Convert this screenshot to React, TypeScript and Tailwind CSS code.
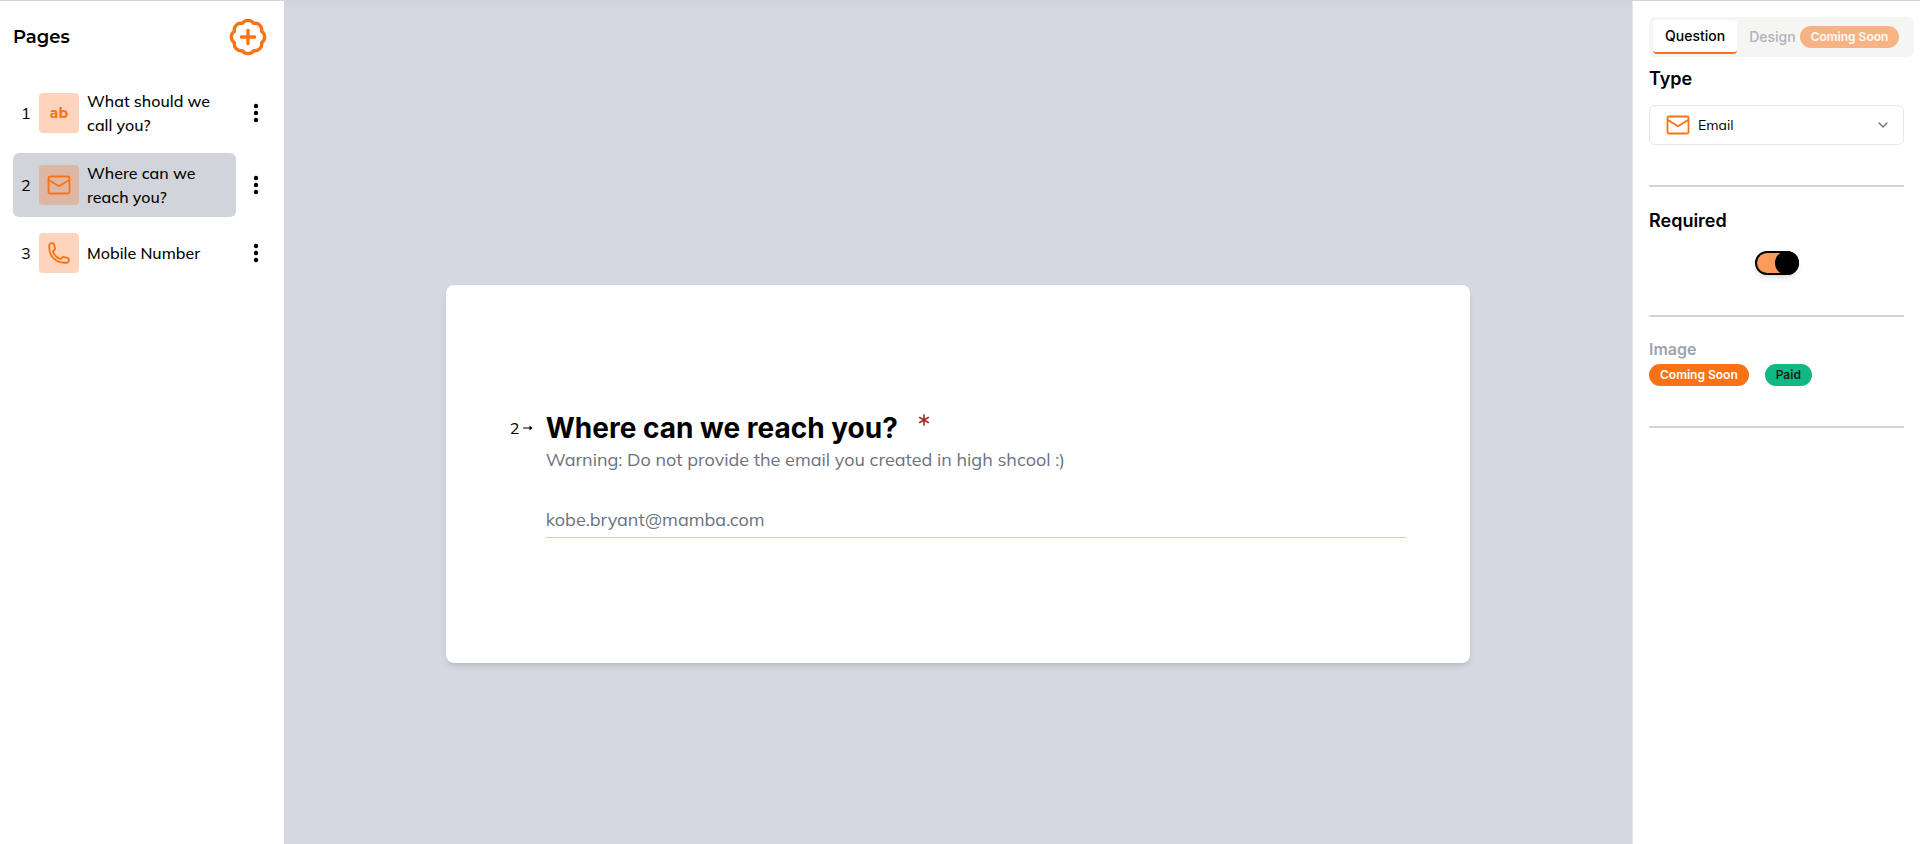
import { useState } from 'react';
import { Asterisk, BadgePlus, ChevronDown } from 'lucide-react';

interface Page {
  id: number;
  title: string;
  type: 'text' | 'email' | 'phone';
}

const pages: Page[] = [
  { id: 1, title: 'What should we call you?', type: 'text' },
  { id: 2, title: 'Where can we reach you?', type: 'email' },
  { id: 3, title: 'Mobile Number', type: 'phone' },
];

function MailIcon() {
  return (
    <svg width="24" height="24" viewBox="0 0 24 24" fill="none" stroke="#f97316" strokeWidth="1.8" strokeLinejoin="round" strokeLinecap="round">
      <rect x="1.5" y="3.5" width="21" height="17" rx="1.5" />
      <path d="M1.8 7 12 13.3 22.2 7" />
    </svg>
  );
}

function PhoneIcon() {
  return (
    <svg width="24" height="24" viewBox="0 0 24 24" fill="none" stroke="#f97316" strokeWidth="1.8" strokeLinejoin="round" strokeLinecap="round">
      <path d="M2.25 6.75c0 8.284 6.716 15 15 15h2.25a2.25 2.25 0 0 0 2.25-2.25v-1.372c0-.516-.351-.966-.852-1.091l-4.423-1.106c-.44-.11-.902.055-1.173.417l-.97 1.293c-.282.376-.769.542-1.21.38a12.035 12.035 0 0 1-7.143-7.143c-.162-.441.004-.928.38-1.21l1.293-.97c.363-.271.527-.734.417-1.173L6.963 3.102a1.125 1.125 0 0 0-1.091-.852H4.5A2.25 2.25 0 0 0 2.25 4.5v2.25Z" />
    </svg>
  );
}

function DotsIcon() {
  return (
    <svg width="6" height="20" viewBox="0 0 6 20" fill="#000">
      <circle cx="3" cy="3" r="2.2" />
      <circle cx="3" cy="10" r="2.2" />
      <circle cx="3" cy="17" r="2.2" />
    </svg>
  );
}

function PageIcon({ type }: { type: Page['type'] }) {
  if (type === 'email') return <MailIcon />;
  if (type === 'phone') return <PhoneIcon />;
  return <span className="font-['Montserrat','Inter',sans-serif] text-sm font-bold text-[#f97316]">ab</span>;
}

function Divider() {
  return <hr className="mt-10 mb-5 border-t-2 border-[#d1d5db]" />;
}

export default function App() {
  const [selected, setSelected] = useState(2);
  const [required, setRequired] = useState(true);

  return (
    <div className="flex min-h-screen border-t border-[#d1d5db] bg-white font-['Mulish','Open_Sans',sans-serif] text-black">
      <aside className="w-71 shrink-0 px-[13px] pt-4">
        <div className="flex items-center justify-between pr-[3px]">
          <h2 className="font-['Montserrat','Inter',sans-serif] text-lg font-semibold">Pages</h2>
          <button type="button" aria-label="Add page">
            <BadgePlus size={40} color="#f97316" />
          </button>
        </div>

        <ul className="mt-6 space-y-2">
          {pages.map((p) => (
            <li key={p.id} className="flex items-center justify-between pr-3">
              <button
                type="button"
                onClick={() => setSelected(p.id)}
                className={
                  'flex w-[223px] items-center rounded-md py-2 pl-2 text-left ' +
                  (p.id === selected ? 'bg-[#d1d5db]' : '')
                }
              >
                <span className="w-[18px] text-base">{p.id}</span>
                <span className="flex size-10 shrink-0 items-center justify-center rounded bg-[#fb6f24]/30">
                  <PageIcon type={p.type} />
                </span>
                <span className="ml-2 w-36 text-base font-medium">{p.title}</span>
              </button>
              <button type="button" aria-label={`Options for page ${p.id}`}>
                <DotsIcon />
              </button>
            </li>
          ))}
        </ul>
      </aside>

      <main className="flex flex-1 items-center justify-center bg-[#d5d8e0] pt-[102px] shadow-[inset_0_8px_8px_-6px_rgba(0,0,0,0.04)]">
        <section className="w-[76%] rounded-lg bg-white px-16 py-[125px] shadow-md">
          <div className="flex">
            <span className="flex h-9 w-9 shrink-0 items-center gap-1 text-base">
              2
              <svg width="10" height="8" viewBox="0 0 10 8" fill="none" stroke="#000">
                <path d="M0 4h8.5" />
                <path d="M6.5 1.5 9.5 4 6.5 6.5Z" fill="#000" stroke="none" />
              </svg>
            </span>
            <div className="flex-1">
              <h1 className="flex items-start gap-4 font-['Inter',sans-serif] text-[28px] leading-9 font-bold">
                Where can we reach you?
                <Asterisk size={20} color="#9f2f20" />
              </h1>
              <p className="text-lg text-[#6b7280]">Warning: Do not provide the email you created in high shcool :)</p>
              <input
                type="email"
                aria-label="Where can we reach you?"
                placeholder="kobe.bryant@mamba.com"
                className="mt-7 block h-9 w-full border-b border-orange-500/40 text-lg placeholder:text-[#6b7280] focus:outline-none"
              />
            </div>
          </div>
        </section>
      </main>

      <aside className="w-72 shrink-0 border-l border-gray-200 px-4 pt-4 font-['Inter',sans-serif]">
        <div className="-mr-[10px] flex h-10 items-center rounded-md bg-stone-100 px-1 text-sm font-medium whitespace-nowrap">
          <button type="button" className="h-[34px] rounded border-b-2 border-[#f97316] bg-white px-3">
            Question
          </button>
          <button type="button" disabled className="flex items-center gap-1 pl-3 opacity-50">
            <span className="text-gray-500">Design</span>
            <span className="rounded-full bg-[#f97316] px-[11px] py-[3px] text-xs font-semibold text-white">Coming Soon</span>
          </button>
        </div>

        <label htmlFor="type" className="mt-2 block text-lg font-semibold">Type</label>
        <div className="relative mt-3 flex h-10 items-center rounded-md border border-gray-200 pl-4">
          <MailIcon />
          <select
            id="type"
            className="absolute inset-0 appearance-none pl-12 font-['Mulish','Open_Sans',sans-serif] text-sm focus:outline-none"
          >
            <option>Email</option>
          </select>
          <ChevronDown size={16} className="pointer-events-none absolute right-3 text-gray-500" />
        </div>
        <Divider />

        <label htmlFor="required" className="block text-lg font-semibold">Required</label>
        <div className="mt-4 flex justify-center">
          <input
            id="required"
            type="checkbox"
            role="switch"
            checked={required}
            onChange={(e) => setRequired(e.target.checked)}
            className="h-6 w-11 appearance-none rounded-full border-2 border-black bg-gray-200 shadow-md before:-mt-0.5 before:block before:size-6 before:-translate-x-0.5 before:rounded-full before:bg-black checked:bg-[#fd9a5c] checked:before:translate-x-[18px]"
          />
        </div>
        <Divider />

        <h3 className="text-base font-semibold text-[#9ca3af]">Image</h3>
        <div className="mt-[3px] flex gap-4 text-xs font-semibold">
          <span className="rounded-full bg-[#f97316] px-[11px] py-[3px] text-white">Coming Soon</span>
          <span className="rounded-full bg-[#10b981] px-[11px] py-[3px] text-[#1c1917]">Paid</span>
        </div>
        <Divider />
      </aside>
    </div>
  );
}
